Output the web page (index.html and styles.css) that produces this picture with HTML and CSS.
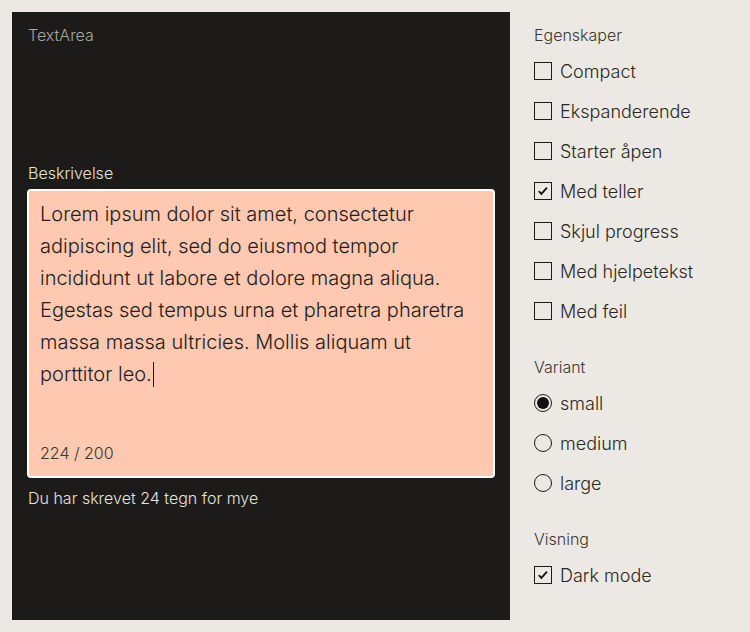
FILE: index.html
```html
<!DOCTYPE html>
<html lang="no">
<head>
<meta charset="utf-8">
<title>TextArea</title>
<link rel="stylesheet" href="styles.css">
</head>
<body>
<div class="page">
  <main class="preview">
    <div class="preview-title">TextArea</div>
    <div class="field">
      <label class="field-label">Beskrivelse</label>
      <div class="textarea">
        <div class="textarea-text">Lorem ipsum dolor sit amet, consectetur<br>adipiscing elit, sed do eiusmod tempor<br>incididunt ut labore et dolore magna aliqua.<br>Egestas sed tempus urna et pharetra pharetra<br>massa massa ultricies. Mollis aliquam ut<br>porttitor leo.<span class="caret"></span></div>
        <div class="counter">224 / 200</div>
      </div>
      <div class="error">Du har skrevet 24 tegn for mye</div>
    </div>
  </main>
  <aside class="controls">
    <fieldset class="group">
      <legend class="group-title">Egenskaper</legend>
      <label class="option"><span class="box"></span>Compact</label>
      <label class="option"><span class="box"></span>Ekspanderende</label>
      <label class="option"><span class="box"></span>Starter åpen</label>
      <label class="option"><span class="box checked"><svg viewBox="0 0 18 18"><path d="M4.2 9.2l3 3 6.3-7" fill="none" stroke="#111" stroke-width="2"/></svg></span>Med teller</label>
      <label class="option"><span class="box"></span>Skjul progress</label>
      <label class="option"><span class="box"></span>Med hjelpetekst</label>
      <label class="option"><span class="box"></span>Med feil</label>
    </fieldset>
    <fieldset class="group">
      <legend class="group-title">Variant</legend>
      <label class="option"><span class="radio checked"></span>small</label>
      <label class="option"><span class="radio"></span>medium</label>
      <label class="option"><span class="radio"></span>large</label>
    </fieldset>
    <fieldset class="group">
      <legend class="group-title">Visning</legend>
      <label class="option"><span class="box checked"><svg viewBox="0 0 18 18"><path d="M4.2 9.2l3 3 6.3-7" fill="none" stroke="#111" stroke-width="2"/></svg></span>Dark mode</label>
    </fieldset>
  </aside>
</div>
</body>
</html>
```
FILE: styles.css
```css
html, body {
  margin: 0;
  padding: 0;
  background: #ece8e3;
  font-family: Inter, "Noto Sans", sans-serif;
  font-weight: 300;
}
.page {
  display: flex;
  padding: 12px;
  gap: 24px;
  height: 632px;
  box-sizing: border-box;
}
.preview {
  width: 498px;
  height: 608px;
  background: #1c1b19;
  box-sizing: border-box;
  padding: 13px 15px 0 15px;
  display: flex;
  flex-direction: column;
}
.preview-title {
  color: #a9a6a1;
  font-size: 16px;
  line-height: 20px;
  margin-left: 1px;
}
.field {
  margin-top: 118px;
  display: flex;
  flex-direction: column;
}
.field-label {
  color: #e6e3de;
  font-size: 16px;
  line-height: 20px;
  margin-left: 1px;
  margin-bottom: 6px;
}
.textarea {
  width: 468px;
  height: 289px;
  box-sizing: border-box;
  background: #ffc8b0;
  border: 2px solid #ffffff;
  border-radius: 4px;
  padding: 7px 11px 13px 11px;
  display: flex;
  flex-direction: column;
  justify-content: space-between;
  color: #23201d;
}
.textarea-text {
  font-size: 20px;
  line-height: 32px;
}
.caret {
  display: inline-block;
  width: 1px;
  height: 25px;
  background: #1c1b19;
  vertical-align: -6px;
  margin-left: 1px;
}
.counter {
  font-size: 16px;
  line-height: 20px;
  color: #3a3633;
}
.error {
  color: #e6e3de;
  font-size: 16px;
  line-height: 20px;
  margin-top: 10px;
  margin-left: 1px;
}
.controls {
  display: flex;
  flex-direction: column;
  padding-top: 13px;
}
.group {
  border: 0;
  margin: 0 0 26px 0;
  padding: 0;
  display: flex;
  flex-direction: column;
}
.group-title {
  padding: 0;
  font-size: 16px;
  line-height: 20px;
  color: #3b3935;
  margin-bottom: 6px;
}
.option {
  display: flex;
  align-items: center;
  height: 40px;
  gap: 8px;
  font-size: 18px;
  color: #2a2825;
}
.box {
  width: 18px;
  height: 18px;
  box-sizing: border-box;
  border: 1.5px solid #1c1b19;
  display: flex;
}
.box svg {
  width: 100%;
  height: 100%;
}
.radio {
  width: 18px;
  height: 18px;
  box-sizing: border-box;
  border: 1.5px solid #1c1b19;
  border-radius: 50%;
  position: relative;
}
.radio.checked::after {
  content: "";
  position: absolute;
  left: 1.5px;
  top: 1.5px;
  width: 12px;
  height: 12px;
  border-radius: 50%;
  background: #111;
}
```
